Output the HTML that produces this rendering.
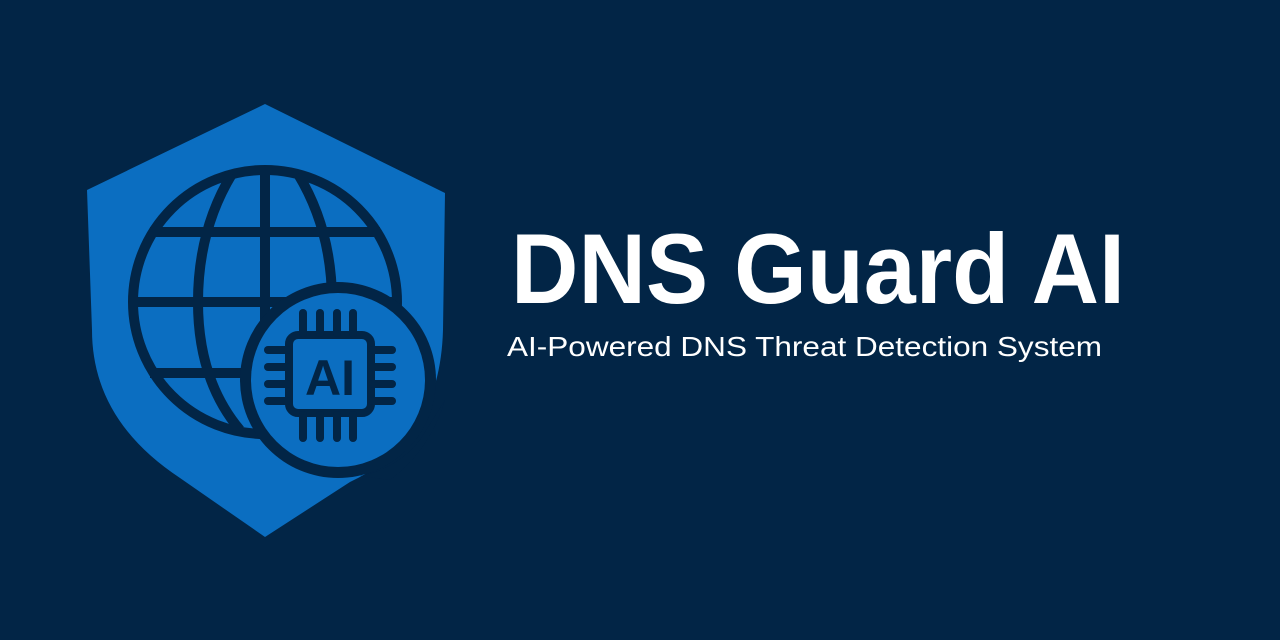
<!DOCTYPE html>
<html><head><style>
html,body{margin:0;padding:0;width:1280px;height:640px;background:#022546;overflow:hidden}
</style></head><body>
<svg width="1280" height="640" viewBox="0 0 1280 640" xmlns="http://www.w3.org/2000/svg">
<rect width="1280" height="640" fill="#022546"/>
<path d="M265 104 L445 193 L443 330 Q440 440 350 482 L265 537 L180 478 Q92 420 92 330 L87 190 Z" fill="#0B6EC1"/>
<g fill="none" stroke="#022546" stroke-width="10">
<circle cx="265" cy="302" r="132"/>
<path d="M232 174 Q198 230 198 302 Q198 380 240 430"/>
<path d="M298 174 Q332 230 332 302"/>
<line x1="265" y1="170" x2="265" y2="434"/>
<line x1="133" y1="302" x2="397" y2="302"/>
<line x1="150" y1="232" x2="380" y2="232"/>
<line x1="150" y1="373" x2="380" y2="373"/>
</g>
<circle cx="338" cy="380" r="98" fill="#022546"/>
<circle cx="338" cy="380" r="87" fill="#0B6EC1"/>
<path d="M420 440 A98 98 0 0 1 360 476 L390 480 Q430 450 445 400 Z" fill="#022546"/>
<g stroke="#022546" stroke-width="8" fill="none" stroke-linecap="round">
<rect x="289" y="335" width="82" height="78" rx="9"/>
<line x1="303" y1="313" x2="303" y2="333"/><line x1="320" y1="313" x2="320" y2="333"/>
<line x1="337" y1="313" x2="337" y2="333"/><line x1="353" y1="313" x2="353" y2="333"/>
<line x1="303" y1="415" x2="303" y2="438"/><line x1="320" y1="415" x2="320" y2="438"/>
<line x1="337" y1="415" x2="337" y2="438"/><line x1="353" y1="415" x2="353" y2="438"/>
<line x1="268" y1="350" x2="287" y2="350"/><line x1="268" y1="367" x2="287" y2="367"/>
<line x1="268" y1="384" x2="287" y2="384"/><line x1="268" y1="401" x2="287" y2="401"/>
<line x1="373" y1="350" x2="392" y2="350"/><line x1="373" y1="367" x2="392" y2="367"/>
<line x1="373" y1="384" x2="392" y2="384"/><line x1="373" y1="401" x2="392" y2="401"/>
</g>
<text x="330" y="395" text-anchor="middle" font-family="Liberation Sans, sans-serif" font-weight="bold" font-size="50" fill="#022546">AI</text>
<text x="511" y="303" font-family="Liberation Sans, sans-serif" font-weight="bold" font-size="99" fill="#ffffff" textLength="614" lengthAdjust="spacingAndGlyphs">DNS Guard AI</text>
<text x="507" y="356" font-family="Liberation Sans, sans-serif" font-size="28" fill="#ffffff" textLength="595" lengthAdjust="spacingAndGlyphs">AI-Powered DNS Threat Detection System</text>
</svg>
</body></html>
